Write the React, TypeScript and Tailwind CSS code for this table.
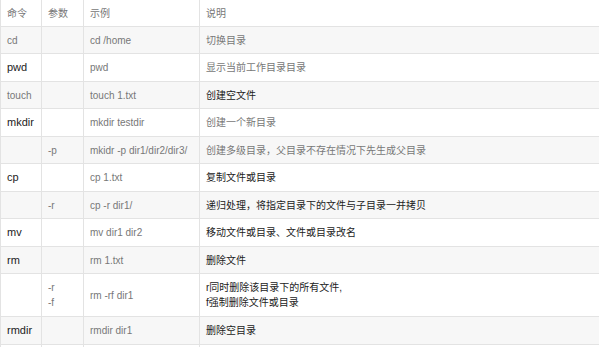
import React from "react";

type Row = {
  cmd: string;
  cmdDark?: boolean;
  opt: string[];
  ex: string;
  desc: string[];
  descDark?: boolean;
  h: number;
  gray: boolean;
};

const rows: Row[] = [
  { cmd: "命令", opt: ["参数"], ex: "示例", desc: ["说明"], h: 27, gray: false },
  { cmd: "cd", opt: [], ex: "cd /home", desc: ["切换目录"], h: 27, gray: true },
  { cmd: "pwd", cmdDark: true, opt: [], ex: "pwd", desc: ["显示当前工作目录目录"], h: 28, gray: false },
  { cmd: "touch", opt: [], ex: "touch 1.txt", desc: ["创建空文件"], descDark: true, h: 27, gray: true },
  { cmd: "mkdir", cmdDark: true, opt: [], ex: "mkdir testdir", desc: ["创建一个新目录"], h: 28, gray: false },
  { cmd: "", opt: ["-p"], ex: "mkidr -p dir1/dir2/dir3/", desc: ["创建多级目录，父目录不存在情况下先生成父目录"], h: 27, gray: true },
  { cmd: "cp", cmdDark: true, opt: [], ex: "cp 1.txt", desc: ["复制文件或目录"], descDark: true, h: 28, gray: false },
  { cmd: "", opt: ["-r"], ex: "cp -r dir1/", desc: ["递归处理，将指定目录下的文件与子目录一并拷贝"], descDark: true, h: 27, gray: true },
  { cmd: "mv", cmdDark: true, opt: [], ex: "mv dir1 dir2", desc: ["移动文件或目录、文件或目录改名"], descDark: true, h: 28, gray: false },
  { cmd: "rm", cmdDark: true, opt: [], ex: "rm 1.txt", desc: ["删除文件"], descDark: true, h: 27, gray: true },
  { cmd: "", opt: ["-r", "-f"], ex: "rm -rf dir1", desc: ["r同时删除该目录下的所有文件,", "f强制删除文件或目录"], descDark: true, h: 43, gray: false },
  { cmd: "rmdir", cmdDark: true, opt: [], ex: "rmdir dir1", desc: ["删除空目录"], descDark: true, h: 28, gray: true },
  { cmd: "", opt: [], ex: "", desc: [], h: 28, gray: false },
];

export default function App() {
  return (
    <div
      className="w-[600px] h-[347px] overflow-hidden bg-white text-[10px] leading-[15px]"
      style={{ fontFamily: '"Liberation Sans", Arial, "Noto Sans CJK SC", sans-serif' }}
    >
      <div className="w-[599px] border-l border-[#e3e3e3]">
        {rows.map((r, i) => (
          <div
            key={i}
            className={`grid grid-cols-[41px_42px_116px_1fr] border-b border-[#e3e3e3] ${r.gray ? "bg-[#f7f7f7]" : "bg-white"}`}
            style={{ height: r.h }}
          >
            <div className={`flex items-center pl-[6px] border-r border-[#e3e3e3] ${r.cmdDark ? "text-[#222] text-[11px]" : "text-[#777]"}`}>
              {r.cmd}
            </div>
            <div className="flex flex-col justify-center pl-[6px] border-r border-[#e3e3e3] text-[#777]">
              {r.opt.map((o, j) => (
                <div key={j}>{o}</div>
              ))}
            </div>
            <div className="flex items-center pl-[6px] border-r border-[#e3e3e3] text-[#777] whitespace-nowrap">
              {r.ex}
            </div>
            <div className={`flex flex-col justify-center pl-[6px] whitespace-nowrap ${r.descDark ? "text-[#222]" : "text-[#777]"}`}>
              {r.desc.map((d, j) => (
                <div key={j}>{d}</div>
              ))}
            </div>
          </div>
        ))}
      </div>
    </div>
  );
}
